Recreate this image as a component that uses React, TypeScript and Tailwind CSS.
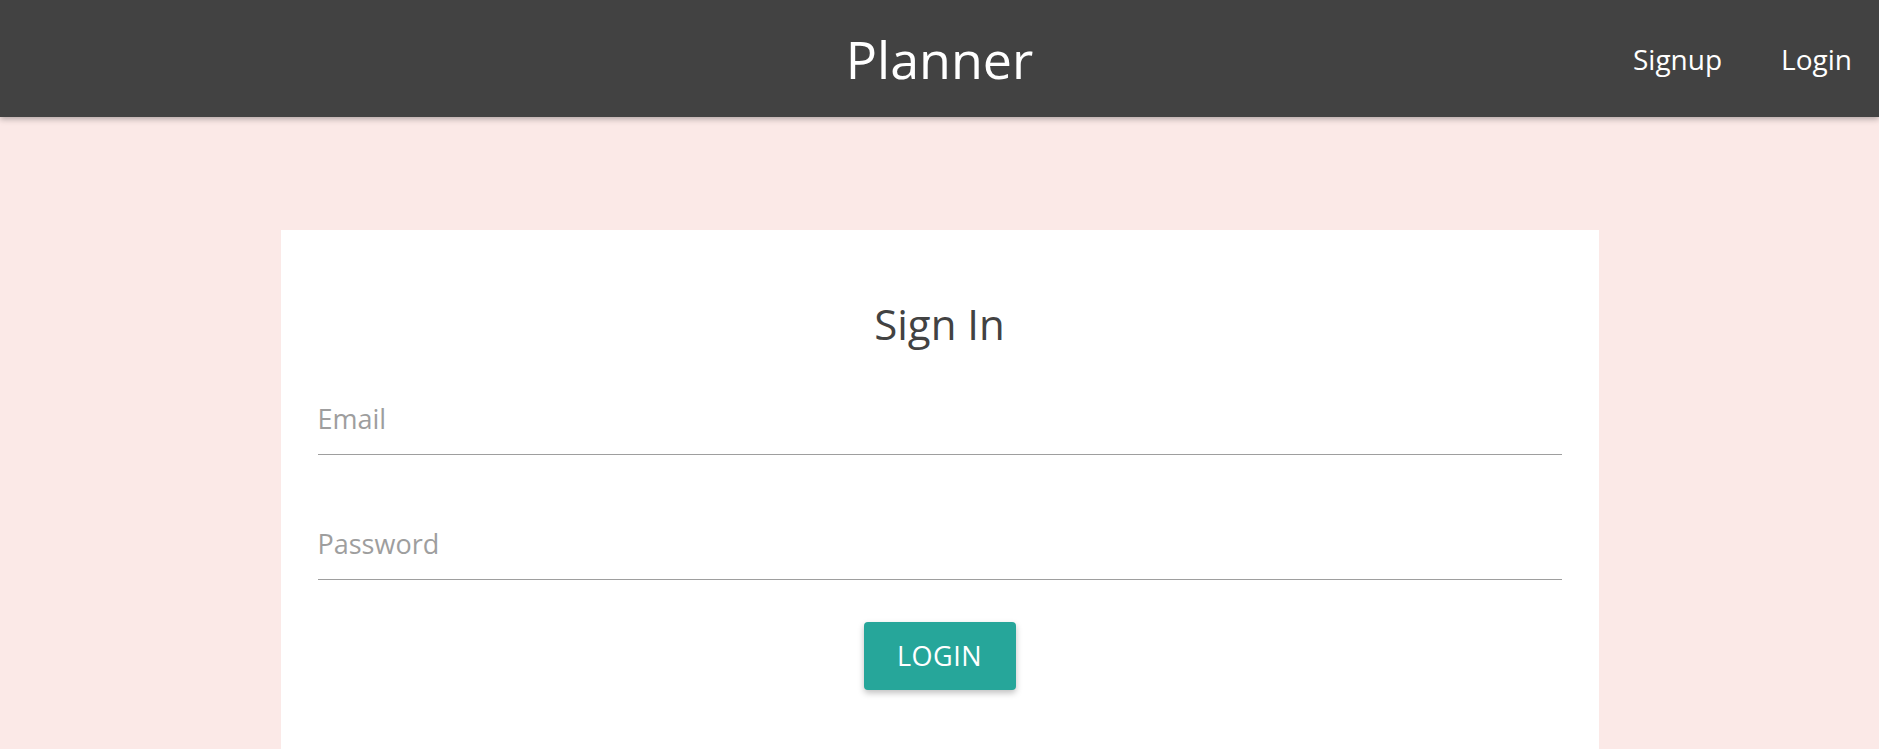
import { useState } from 'react';

const font = { fontFamily: '"Open Sans", "Noto Sans", sans-serif' };

function Field({ label, type }: { label: string; type: string }) {
  const [value, setValue] = useState('');
  return (
    <div className="border-b border-[#9e9e9e] pb-[17px]">
      <input
        type={type}
        value={value}
        onChange={(e) => setValue(e.target.value)}
        placeholder={label}
        className="block h-[36px] w-full bg-transparent text-[27px] leading-[36px] text-[#424242] outline-none placeholder:text-[#9e9e9e]"
      />
    </div>
  );
}

export default function App() {
  return (
    <div className="min-h-screen bg-[#fbe9e7]" style={font}>
      <nav className="relative z-10 flex h-[117px] items-center justify-end bg-[#424242] pr-[12px] shadow-[0_2px_6px_rgba(0,0,0,0.3)]">
        <a href="#" className="absolute left-1/2 -translate-x-1/2 text-[52px] leading-none text-white">
          Planner
        </a>
        <ul className="flex items-center">
          <li>
            <a href="#" className="block pl-[27px] pr-[44px] text-[28px] text-white">
              Signup
            </a>
          </li>
          <li>
            <a href="#" className="block px-[15px] text-[28px] text-white">
              Login
            </a>
          </li>
        </ul>
      </nav>

      <main className="pt-[113px]">
        <div className="mx-auto w-[1318px] bg-white px-[37px] pb-[80px] pt-[66px]">
          <h1 className="text-center text-[42px] leading-[56px] text-[#424242]">Sign In</h1>
          <form className="mt-[49px]" onSubmit={(e) => e.preventDefault()}>
            <Field label="Email" type="email" />
            <div className="mt-[71px]">
              <Field label="Password" type="password" />
            </div>
            <div className="mt-[42px] flex justify-center">
              <button
                type="submit"
                className="h-[68px] w-[152px] rounded-[4px] bg-[#26a69a] text-[27px] tracking-[0.5px] text-white shadow-[0_3px_6px_rgba(0,0,0,0.25)]"
              >
                LOGIN
              </button>
            </div>
          </form>
        </div>
      </main>
    </div>
  );
}
